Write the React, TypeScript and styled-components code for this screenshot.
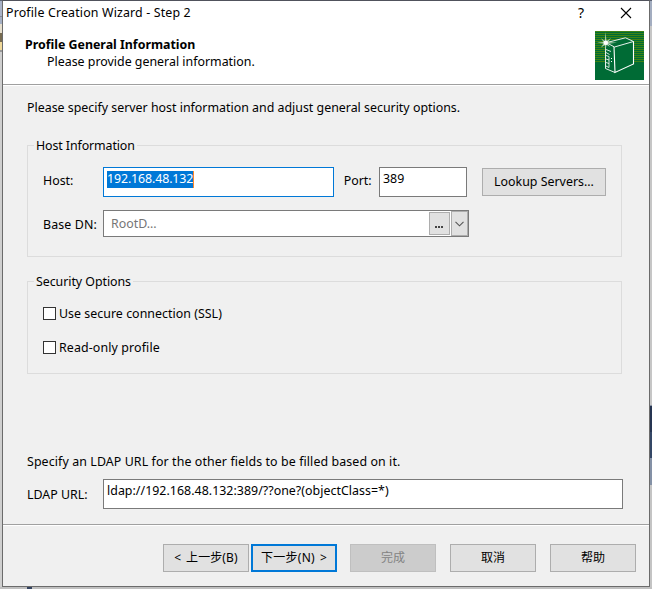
import React from 'react';
import styled, { createGlobalStyle } from 'styled-components';

const GlobalStyle = createGlobalStyle`
  * { box-sizing: border-box; }
  body {
    margin: 0;
    overflow: hidden;
    color: #000;
    font: 12.4px/16px "Noto Sans", "Noto Sans CJK SC", sans-serif;
  }
  button, input { font: inherit; color: inherit; }
`;

const Desktop = styled.div`
  display: grid;
  grid-template-columns: 2px 648px 2px;
  grid-template-rows: 587px 2px;
  width: 652px;
  height: 589px;
  background: #c4c4c4;
`;

const LeftEdge = styled.div`
  background: linear-gradient(
    #5d6475 0 1px, #a9b3c8 1px 16px, #808899 16px 17px, #a5afc3 17px 24px,
    #e6dfce 24px 33px, #776b50 33px 42px, #f0d99a 42px 50px, #999 50px 52px, #cfcfcf 52px
  );
`;

const RightEdge = styled.div`
  background: linear-gradient(
    #5d6475 0 1px, #a3adc0 1px 26px, #c6c6c6 26px 405px, #8a93a3 405px 406px,
    #263552 406px 432px, #344766 432px 458px, #8491a6 458px 485px, #c4c4c4 485px
  );
`;

const BottomEdge = styled.div`
  grid-column: 1 / -1;
  background: linear-gradient(90deg, #c0c0c0 0 27px, #34435f 27px 32px, #c0c0c0 32px);
`;

const Window = styled.main`
  display: flex;
  flex-direction: column;
  border: 1px solid #6b6b6b;
  border-top-color: #50525c;
  background: #f0f0f0;
`;

const TitleBar = styled.header`
  display: flex;
  height: 26px;
  padding: 4px 16px 0 3px;
  background: #fff;
`;

const Text = styled.span<{ $track?: number }>`
  white-space: pre;
  letter-spacing: ${(p) => p.$track ?? 0}px;
`;

const TitleText = styled(Text)`
  flex: 1;
`;

const TitleButton = styled.button`
  display: flex;
  justify-content: center;
  width: 14px;
  height: 16px;
  padding: 0;
  border: 0;
  background: none;
  & + & { margin-left: 31px; }
  svg { margin-top: 2px; }
`;

const HelpButton = styled(TitleButton)`
  font-size: 14px;
`;

const Banner = styled.section`
  display: flex;
  justify-content: space-between;
  height: 58px;
  padding: 4px 5px 0 22px;
  border-bottom: 1px solid #a0a0a0;
  background: #fff;
`;

const BannerCopy = styled.div`
  padding-top: 6px;
`;

const BannerTitle = styled.h1`
  margin: 0;
  font-size: 12.4px;
  line-height: 16px;
  font-weight: 700;
`;

const BannerNote = styled.p`
  margin: 1px 0 0 22px;
`;

const Body = styled.section`
  display: flex;
  flex-direction: column;
  height: 440px;
  padding: 14px 27px 0 24px;
  border-top: 1px solid #fff;
  border-bottom: 1px solid #a0a0a0;
`;

const Group = styled.fieldset<{ $height: number; $top: number }>`
  position: relative;
  min-width: 0;
  height: ${(p) => p.$height}px;
  margin: ${(p) => p.$top}px 0 0;
  padding: 0 0 0 15px;
  border: 1px solid #dcdcdc;
`;

const GroupTitle = styled.div`
  position: absolute;
  left: 6px;
  top: -8px;
  padding: 0 2px;
  background: #f0f0f0;
`;

const Row = styled.div<{ $top: number }>`
  display: flex;
  margin-top: ${(p) => p.$top}px;
`;

const FieldLabel = styled.label<{ $width: number; $drop?: number }>`
  flex: none;
  width: ${(p) => p.$width}px;
  padding-top: ${(p) => p.$drop ?? 6}px;
  white-space: nowrap;
`;

const Field = styled.div<{ $width: number; $focus?: boolean }>`
  display: flex;
  flex: none;
  align-items: flex-start;
  width: ${(p) => p.$width}px;
  height: 30px;
  padding: 3px 3px 0;
  border: 1px solid ${(p) => (p.$focus ? '#0078d7' : '#7a7a7a')};
  background: #fff;
`;

const Selection = styled(Text)`
  height: 17px;
  border-right: 1px solid #ff8728;
  background: #0078d7;
  color: #fff;
`;

const Combo = styled.div`
  display: flex;
  width: 366px;
  height: 27px;
  border: 1px solid #7a7a7a;
  background: #fff;
`;

const Placeholder = styled.span`
  flex: 1;
  padding: 5px 0 0 7px;
  color: #767676;
`;

const ComboButton = styled.button<{ $width: number; $inset?: boolean }>`
  display: flex;
  align-items: center;
  justify-content: center;
  width: ${(p) => p.$width}px;
  height: ${(p) => (p.$inset ? 23 : 25)}px;
  margin: ${(p) => (p.$inset ? '1px 1px 0 0' : '0')};
  padding: 0;
  border: 1px solid #adadad;
  background: #e1e1e1;
`;

const BrowseButton = styled(ComboButton)`
  padding: 7px 1px 0 0;
`;

const PushButton = styled.button<{ $width?: number; $primary?: boolean }>`
  width: ${(p) => p.$width ?? 86}px;
  height: 28px;
  padding: 0;
  border: ${(p) => (p.$primary ? '2px solid #0078d7' : '1px solid #adadad')};
  background: #e1e1e1;
  line-height: 16px;
  white-space: pre;
  &:disabled { border-color: #bfbfbf; background: #ccc; color: #838383; }
`;

const LookupButton = styled(PushButton)`
  margin: 1px 0 0 15px;
`;

const CheckRow = styled.label<{ $top: number }>`
  display: flex;
  align-items: flex-start;
  gap: 3px;
  height: 16px;
  margin-top: ${(p) => p.$top}px;
`;

const CheckBox = styled.span`
  width: 13px;
  height: 13px;
  margin-top: 1px;
  border: 1px solid #333;
  background: #fff;
`;

const UrlNote = styled.p`
  margin: 80px 0 0;
`;

const Footer = styled.footer`
  display: flex;
  justify-content: flex-end;
  flex: 1;
  gap: 14px;
  padding: 18px 13px 0 0;
  border-top: 1px solid #fff;
  font-size: 12px;
`;

const StepButtons = styled.div`
  display: flex;
  gap: 2px;
  margin-right: -1px;
`;

const StepLabel = styled(Text)`
  word-spacing: 1.5px;
`;

function ServerLogo() {
  return (
    <svg width="49" height="49" viewBox="0 0 49 49">
      <rect width="49" height="49" fill="#006b35" />
      {Array.from({ length: 16 }, (_, i) => (
        <rect key={i} y={i * 2} width="49" height="1" fill="#3f8213" />
      ))}
      <path d="M10.5 12L31 6.5L38.5 10.5V33L20 41.5L10.5 37.5Z" fill="#006b35" />
      <g fill="none" stroke="#fff">
        <path d="M12 11.5L30.5 6.8L38.5 10.5L19.5 16L12 12" strokeWidth="0.9" />
        <path d="M38.5 10.5V33L20 41.5L19 16" strokeWidth="1.1" />
        <path d="M10.5 14V37.5L20 41.5" strokeWidth="0.9" />
        <path d="M11 18.5L16 20.5M11 21.5L14.5 23.5M11 24.5L14 25.5V36.5L11 35M11 28L14 29M11 31.5L14 32.5" strokeWidth="0.8" />
      </g>
      <path d="M16 27h1v1h-1zM16 30h1v1h-1z" fill="#fff" />
      <path d="M10.5 1L11.5 10L16 7L13 11L22 11.8L13 12.8L15 16L11.5 13.8L10.5 20L9.8 14L6 16.5L8.5 12.6L2 11.8L8.5 11L6 7.2L9.8 10Z" fill="#a9cfae" />
      <circle cx="10.8" cy="11.8" r="2.2" fill="#fff" />
    </svg>
  );
}

export default function App() {
  return (
    <>
      <GlobalStyle />
      <Desktop>
        <LeftEdge />
        <Window>
          <TitleBar>
            <TitleText $track={0.15}>Profile Creation Wizard - Step 2</TitleText>
            <HelpButton aria-label="Help">?</HelpButton>
            <TitleButton aria-label="Close">
              <svg width="12" height="12" viewBox="0 0 12 12">
                <path d="M1 1L11 11M11 1L1 11" stroke="#000" strokeWidth="1.1" />
              </svg>
            </TitleButton>
          </TitleBar>
          <Banner>
            <BannerCopy>
              <BannerTitle>Profile General Information</BannerTitle>
              <BannerNote>Please provide general information.</BannerNote>
            </BannerCopy>
            <ServerLogo />
          </Banner>
          <Body>
            <Text>Please specify server host information and adjust general security options.</Text>
            <Group $height={112} $top={29}>
              <GroupTitle><Text $track={-0.1}>Host Information</Text></GroupTitle>
              <Row $top={21}>
                <FieldLabel $width={60}>Host:</FieldLabel>
                <Field $width={231} $focus><Selection $track={-0.12}>192.168.48.132</Selection></Field>
                <FieldLabel $width={45}><Text>{'   '}Port:</Text></FieldLabel>
                <Field $width={88}>389</Field>
                <LookupButton $width={124}>Lookup Servers...</LookupButton>
              </Row>
              <Row $top={13}>
                <FieldLabel $width={60} $drop={7}><Text $track={0.12}>Base DN:</Text></FieldLabel>
                <Combo>
                  <Placeholder>RootD...</Placeholder>
                  <BrowseButton $width={21} $inset aria-label="Browse">
                    <svg width="8" height="2" viewBox="0 0 8 2">
                      <path d="M0 0h2v2H0zM3 0h2v2H3zM6 0h2v2H6z" fill="#444" />
                    </svg>
                  </BrowseButton>
                  <ComboButton $width={17} aria-label="Open list">
                    <svg width="9" height="6" viewBox="0 0 9 6">
                      <path d="M.5 .8L4.5 4.8L8.5 .8" fill="none" stroke="#555" strokeWidth="1.1" />
                    </svg>
                  </ComboButton>
                </Combo>
              </Row>
            </Group>
            <Group $height={93} $top={24}>
              <GroupTitle><Text $track={-0.05}>Security Options</Text></GroupTitle>
              <CheckRow $top={24}><CheckBox /><Text $track={0.03}>Use secure connection (SSL)</Text></CheckRow>
              <CheckRow $top={18}><CheckBox /><Text $track={0.12}>Read-only profile</Text></CheckRow>
            </Group>
            <UrlNote><Text $track={0.1}>Specify an LDAP URL for the other fields to be filled based on it.</Text></UrlNote>
            <Row $top={9}>
              <FieldLabel $width={76} $drop={8}>LDAP URL:</FieldLabel>
              <Field $width={520}><Text $track={0.03}>ldap://192.168.48.132:389/??one?(objectClass=*)</Text></Field>
            </Row>
          </Body>
          <Footer>
            <StepButtons>
              <PushButton><StepLabel $track={0.1}>{'< 上一步(B)'}</StepLabel></PushButton>
              <PushButton $primary><StepLabel $track={0.3}>{'下一步(N) >'}</StepLabel></PushButton>
            </StepButtons>
            <PushButton disabled>完成</PushButton>
            <PushButton>取消</PushButton>
            <PushButton>帮助</PushButton>
          </Footer>
        </Window>
        <RightEdge />
        <BottomEdge />
      </Desktop>
    </>
  );
}
